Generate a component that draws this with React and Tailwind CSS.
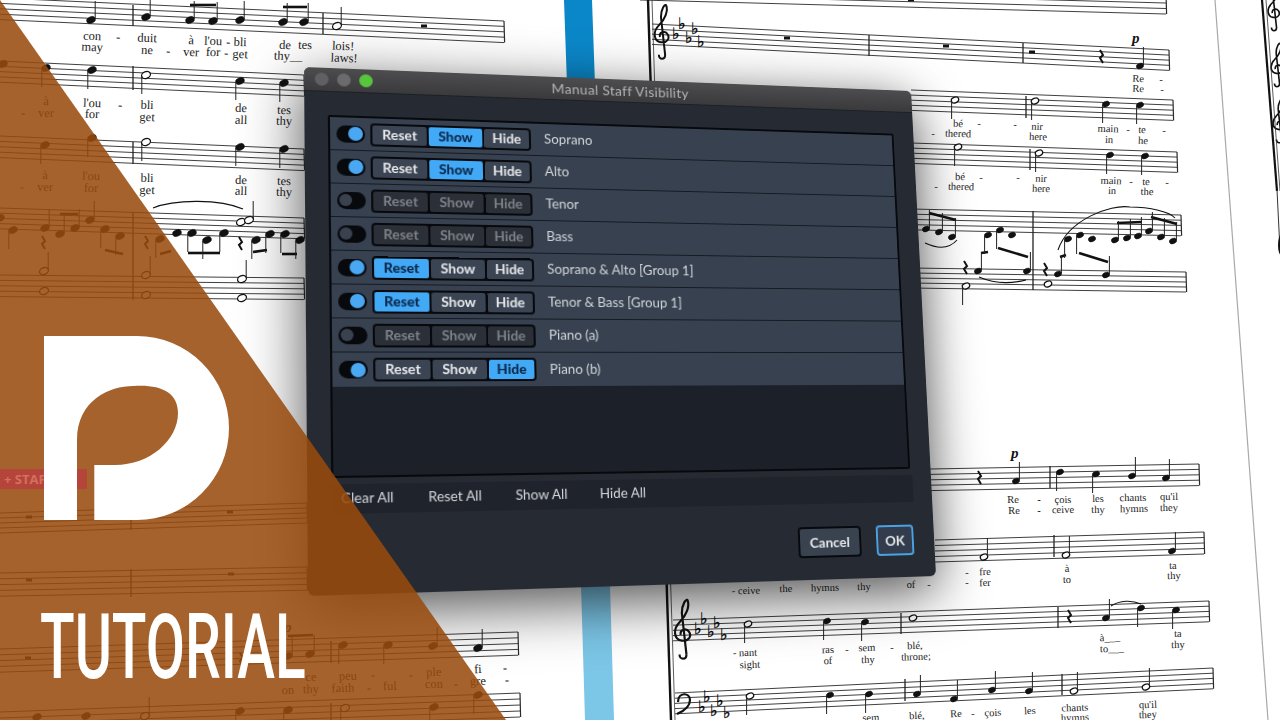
// Thumbnail: engraved score behind, tilted Dorico dialog, brown corner with logo
const rows = [
  { name: "Soprano", on: true, active: "Show" },
  { name: "Alto", on: true, active: "Show" },
  { name: "Tenor", on: false },
  { name: "Bass", on: false },
  { name: "Soprano & Alto [Group 1]", on: true, active: "Reset" },
  { name: "Tenor & Bass [Group 1]", on: true, active: "Reset" },
  { name: "Piano (a)", on: false },
  { name: "Piano (b)", on: true, active: "Hide" },
];

// x1, top y at x1, x2, top y at x2, line spacing
const staves = [
  [0, -2, 504, 21, 5.4],
  [0, 61, 304, 75, 5.3],
  [0, 136, 304, 149, 5.4],
  [0, 208, 304, 218, 5.2],
  [0, 275, 304, 278, 5.4],
  [0, 513, 307, 503, 5],
  [0, 573, 307, 567, 5.8],
  [0, 649, 518, 632, 5.8],
  [0, 712, 520, 693, 6],
  [640, -22, 1166, -8, 5.5],
  [652, 24, 1169, 50, 5.1],
  [911, 90, 1173, 100, 5.1],
  [911, 143, 1177, 152, 5.1],
  [911, 209, 1181, 215, 5.2],
  [911, 268, 1186, 272, 5],
  [930, 469, 1199, 464, 5.4],
  [935, 540, 1204, 532, 5.5],
  [673, 620, 1209, 601, 5.2],
  [675, 693, 1213, 668, 5.2],
];

const bars = [
  [133, 5, 133, 26], [323, 13, 323, 34], [133, 66, 133, 90], [133, 142, 133, 164],
  [133, 212, 133, 300], [131, 508, 131, 530], [131, 569, 131, 597], [331, 641, 331, 663], [331, 703, 331, 727],
  [869, 35, 869, 56], [1023, 43, 1023, 63], [1026, 96, 1026, 118], [1030, 149, 1030, 170], [1033, 211, 1033, 290],
  [1050, 466, 1050, 488], [1054, 535, 1054, 557], [901, 613, 901, 634], [1058, 607, 1058, 628], [905, 679, 905, 701], [1062, 674, 1062, 695],
];

// x, y, stem (1 up, -1 down, 0 none), hollow
const notes = [
  [91, 20, 1], [146, 17, 1], [190, 20, 1], [213, 21, 1], [240, 20, 1], [283, 22, 1], [304, 22, 1], [337, 26, 1, 1],
  [3, 64, -1], [46, 68, -1], [92, 70, -1], [146, 75, -1, 1], [240, 81, -1], [284, 83, -1],
  [45, 145, -1], [92, 138, -1], [146, 142, -1, 1], [240, 147, -1], [284, 149, -1],
  [0, 218, 0], [13, 230, -1], [45, 228, 1], [60, 234, 1], [75, 228, 1], [90, 220, 1], [105, 229, -1], [120, 236, -1],
  [160, 239, -1], [177, 233, 0], [192, 233, -1], [207, 240, -1], [224, 233, -1], [256, 240, -1], [270, 234, -1], [285, 234, -1], [300, 240, -1],
  [241, 222, 0, 1], [249, 220, 1, 1], [44, 271, 1, 1], [44, 291, 0, 1], [146, 275, 1, 1], [146, 295, 0, 1], [242, 279, 1, 1], [242, 298, 0, 1],
  [288, 656, 1], [310, 654, 1], [343, 645, -1], [388, 645, -1], [433, 646, 1], [478, 648, 1],
  [37, 717, 0], [86, 716, 0], [145, 716, 1, 1], [240, 711, -1], [288, 710, -1], [345, 708, -1, 1], [434, 707, -1], [478, 695, -1],
  [1140, 66, 1], [955, 100, -1, 1], [1035, 101, -1, 1], [1106, 104, -1], [1140, 105, -1],
  [958, 147, -1, 1], [1039, 153, -1, 1], [1110, 155, -1], [1145, 156, -1],
  [926, 229, 1], [939, 232, 1], [952, 237, 1], [988, 235, -1], [1000, 230, -1], [1012, 235, 0], [978, 271, 1], [1027, 271, 1], [966, 286, -1, 1],
  [1068, 239, -1], [1080, 235, -1], [1092, 239, 0], [1115, 240, 1], [1127, 238, 1], [1138, 236, 1], [1149, 231, 1], [1161, 237, 1], [1173, 241, 1], [1058, 274, 1], [1106, 275, 1], [1048, 284, 0, 1],
  [1016, 481, 1], [1060, 472, -1], [1096, 474, -1], [1132, 476, 1], [1166, 478, 1],
  [984, 557, 1, 1], [1066, 555, 1, 1], [1172, 551, 1],
  [748, 624, -1, 1], [827, 621, -1], [865, 622, -1], [913, 618, 0, 1], [1106, 618, 1], [1141, 608, -1], [1176, 610, -1],
  [750, 696, -1, 1], [830, 695, -1], [869, 694, -1], [917, 694, 1], [954, 699, 1], [992, 690, 1], [1029, 691, 1], [1074, 691, 1, 1], [1146, 687, 1, 1],
];

const beams = [
  [190, 5, 213, 5], [283, 7, 304, 7], [288, 636, 310, 635],
  [60, 214, 75, 214], [105, 250, 120, 254], [160, 254, 168, 251], [188, 253, 217, 253], [253, 252, 264, 250], [282, 254, 294, 254],
  [929, 213, 953, 220], [981, 253, 985, 252], [998, 248, 1025, 257], [1060, 257, 1063, 255], [1079, 253, 1105, 262],
  [1117, 223, 1139, 222], [1151, 217, 1174, 224],
];

const rests = [
  [424, 26], [29, 517], [230, 512], [29, 580], [231, 574], [28, 658], [787, 38], [946, 46], [1032, 52], [911, 0],
];

const qrests = [[1101, 57], [979, 478], [1069, 617], [241, 660], [43, 243], [146, 243], [240, 244], [965, 268], [1045, 270]];

const lyrics = [
  ["con", 92, 40], ["-", 118, 41], ["duit", 147, 42], ["à", 191, 44], ["l'ou", 213, 45], ["-", 228, 46], ["bli", 240, 46], ["de", 285, 49], ["tes", 305, 49], ["lois!", 343, 50],
  ["may", 92, 51], ["ne", 147, 54], ["-", 168, 55], ["ver", 191, 56], ["for", 213, 56], ["-", 226, 57], ["get", 240, 58], ["thy__", 288, 60], ["laws!", 344, 62],
  ["à", 46, 105], ["ver", 46, 117], ["-", 23, 117], ["l'ou", 92, 107], ["for", 92, 118], ["-", 120, 109], ["bli", 147, 109], ["get", 147, 121], ["de", 241, 112], ["all", 241, 124], ["tes", 284, 114], ["thy", 284, 125],
  ["à", 45, 179], ["ver", 45, 191], ["-", 22, 191], ["l'ou", 91, 180], ["for", 91, 192], ["bli", 147, 182], ["get", 147, 194], ["de", 241, 184], ["all", 241, 195], ["tes", 284, 185], ["thy", 284, 196],
  ["ce", 311, 681], ["peu", 348, 680], ["-", 373, 679], ["-", 411, 679], ["ple", 434, 676], ["fi", 478, 673], ["-", 505, 672],
  ["on", 288, 694], ["thy", 311, 693], ["faith", 343, 692], ["-", 369, 692], ["ful", 390, 690], ["con", 434, 688], ["-", 456, 688], ["gre", 478, 685], ["-", 507, 684],
];

const lyricsRight = [
  ["Re", 1138, 82], ["Re", 1138, 92], ["-", 1161, 83], ["-", 1162, 93],
  ["bé", 958, 127], ["-", 979, 127], ["-", 1015, 128], ["nir", 1037, 130], ["main", 1108, 132], ["-", 1128, 133], ["te", 1142, 133], ["-", 1164, 134],
  ["thered", 958, 137], ["-", 933, 137], ["here", 1038, 140], ["in", 1109, 143], ["he", 1143, 144],
  ["bé", 960, 180], ["-", 981, 181], ["-", 1018, 181], ["nir", 1041, 182], ["main", 1111, 184], ["-", 1131, 185], ["te", 1146, 185], ["-", 1167, 186],
  ["thered", 961, 190], ["-", 936, 190], ["here", 1041, 192], ["in", 1112, 194], ["the", 1147, 195],
  ["Re", 1013, 503], ["-", 1039, 503], ["çois", 1063, 503], ["les", 1098, 502], ["chants", 1133, 501], ["qu'il", 1169, 500],
  ["Re", 1014, 514], ["-", 1039, 514], ["ceive", 1063, 513], ["thy", 1098, 513], ["hymns", 1134, 512], ["they", 1169, 511],
  ["-", 967, 576], ["fre", 985, 575], ["à", 1067, 572], ["ta", 1173, 569], ["-", 967, 586], ["fer", 985, 586], ["to", 1067, 583], ["thy", 1174, 579],
  ["- ceive", 746, 594], ["the", 786, 592], ["hymns", 825, 591], ["thy", 864, 590], ["of", 911, 588], ["-", 929, 588],
  ["- nant", 745, 656], ["sight", 750, 668], ["ras", 828, 653], ["of", 828, 664], ["-", 847, 653], ["sem", 867, 651], ["thy", 868, 663], ["-", 892, 651], ["blé,", 915, 649], ["throne;", 916, 660],
  ["à___", 1110, 641], ["to___", 1112, 652], ["ta", 1178, 637], ["thy", 1178, 648],
  ["sem", 871, 721], ["blé,", 917, 719], ["Re", 956, 717], ["-", 973, 717], ["çois", 993, 716], ["les", 1030, 714], ["chants", 1075, 711], ["hymns", 1075, 721], ["qu'il", 1148, 708], ["they", 1148, 718],
];

const flats = [
  [675, 39], [681, 29], [688, 43], [694, 34], [700, 47],
  [697, 634], [703, 624], [710, 637], [716, 628], [723, 640],
  [701, 712], [706, 702], [713, 716], [719, 706], [726, 718],
];

function tilt(y) {
  return 2.6 - (y * 4.8) / 720;
}

function TrebleClef({ x, y, s = 1 }) {
  return (
    <path
      transform={`translate(${x} ${y}) scale(${s})`}
      d="M3 16 L-1 -20 C-1 -28 3 -33 4 -31 C6 -26 3 -18 -3 -12 C-9 -6 -8 3 -1 4 C5 5 8 0 5 -4 C3 -7 -3 -6 -2 -1 M3 16 C3 21 -3 21 -3 16"
      fill="none"
      stroke="#111"
      strokeWidth="1.9"
    />
  );
}

function Note({ x, y, stem, hollow }) {
  const rx = x < 560 ? 4.6 : 3.8;
  return (
    <g>
      <ellipse
        cx={x}
        cy={y}
        rx={rx}
        ry={rx * 0.72}
        transform={`rotate(-22 ${x} ${y})`}
        fill={hollow ? "#fff" : "#111"}
        stroke="#111"
        strokeWidth={hollow ? 1.3 : 0.4}
      />
      {stem === 1 && <line x1={x + rx - 0.4} y1={y - 1} x2={x + rx - 0.4} y2={y - 19} stroke="#222" strokeWidth="1" />}
      {stem === -1 && <line x1={x - rx + 0.4} y1={y + 1} x2={x - rx + 0.4} y2={y + 19} stroke="#222" strokeWidth="1" />}
    </g>
  );
}

function Score() {
  return (
    <svg className="absolute inset-0" width="1280" height="720" viewBox="0 0 1280 720">
      <polygon points="564,0 592,0 595,85 567,85" fill="#0a87c9" />
      <polygon points="581,585 610,585 614,720 585,720" fill="#7cc6e7" />

      {staves.map(([x1, y1, x2, y2, sp], i) => (
        <g key={i} stroke="#2a2a2a" strokeWidth="0.9">
          {[0, 1, 2, 3, 4].map((n) => (
            <line key={n} x1={x1} y1={y1 + n * sp} x2={x2} y2={y2 + n * sp} />
          ))}
          <line x1={x2} y1={y2} x2={x2 + 0.6} y2={y2 + 4 * sp} strokeWidth="1.2" />
        </g>
      ))}
      {bars.map(([x1, y1, x2, y2], i) => (
        <line key={i} x1={x1} y1={y1} x2={x2} y2={y2} stroke="#222" strokeWidth="1.3" />
      ))}
      {beams.map(([x1, y1, x2, y2], i) => (
        <line key={i} x1={x1} y1={y1} x2={x2 + 3} y2={y2} stroke="#111" strokeWidth="2.6" />
      ))}
      {notes.map(([x, y, stem, hollow], i) => (
        <Note key={i} x={x} y={y} stem={stem} hollow={hollow} />
      ))}
      {rests.map(([x, y], i) => (
        <rect key={i} x={x - 3} y={y - 1.5} width="6" height="3" fill="#111" />
      ))}
      {qrests.map(([x, y], i) => (
        <path key={i} d={`M${x - 1} ${y - 7} L${x + 2} ${y - 2} L${x - 1} ${y + 1} L${x + 2} ${y + 6}`} fill="none" stroke="#111" strokeWidth="2" />
      ))}

      <g fontFamily="'Liberation Serif', serif" fontSize="12.5" fill="#222" textAnchor="middle">
        {lyrics.map(([t, x, y], i) => (
          <text key={i} x={x} y={y} transform={`rotate(${tilt(y)} ${x} ${y})`}>{t}</text>
        ))}
      </g>
      <g fontFamily="'Liberation Serif', serif" fontSize="10.5" fill="#222" textAnchor="middle">
        {lyricsRight.map(([t, x, y], i) => (
          <text key={i} x={x} y={y} transform={`rotate(${tilt(y)} ${x} ${y})`}>{t}</text>
        ))}
      </g>
      <g fontFamily="'DejaVu Sans', sans-serif" fontSize="16" fill="#000">
        {flats.map(([x, y], i) => (
          <text key={i} x={x - 3} y={y} stroke="#000" strokeWidth="0.3">♭</text>
        ))}
      </g>
      <g fontFamily="'Liberation Serif', serif" fontSize="15" fontStyle="italic" fontWeight="bold" fill="#111">
        <text x="1132" y="43">p</text>
        <text x="1011" y="458">p</text>
        <text x="284" y="632">p</text>
      </g>

      <TrebleClef x={662} y={38} s={1.05} />
      <TrebleClef x={683} y={636} s={1.15} />
      <TrebleClef x={1274} y={14} s={0.85} />
      <TrebleClef x={1277} y={70} s={0.85} />
      <TrebleClef x={1279} y={126} s={0.85} />
      <path d="M678 702 C678 692 690 692 690 700 C690 707 684 711 677 714" fill="none" stroke="#111" strokeWidth="2.2" />

      <g fill="none" stroke="#111" strokeWidth="1.1">
        <path d="M153 208 C175 199 220 199 243 209" />
        <path d="M1111 606 C1120 600 1132 600 1141 604" />
        <path d="M1058 250 C1068 220 1110 204 1130 207 C1150 207 1170 212 1175 218" />
        <path d="M925 243 C940 250 950 248 957 240" />
        <path d="M979 277 C995 284 1010 284 1026 280" />
      </g>

      {/* system lines and page edges */}
      <line x1="648" y1="0" x2="671" y2="720" stroke="#111" strokeWidth="2.4" />
      <line x1="652" y1="0" x2="675" y2="720" stroke="#333" strokeWidth="0.8" />
      <line x1="1215" y1="0" x2="1268" y2="720" stroke="#a9a9a9" strokeWidth="1.2" />
      <line x1="1262" y1="0" x2="1277" y2="191" stroke="#111" strokeWidth="2.2" />
      <line x1="1266" y1="0" x2="1280" y2="191" stroke="#333" strokeWidth="0.8" />
      <line x1="1277" y1="190" x2="1280" y2="250" stroke="#333" strokeWidth="1" />
      <ellipse cx="1281" cy="245" rx="3" ry="10" fill="#111" />
    </svg>
  );
}

function Toggle({ on }) {
  return (
    <div className="w-[27px] h-[17px] rounded-full bg-[#07090d] flex items-center px-[2px] shrink-0">
      {on ? (
        <div className="ml-auto w-[14px] h-[14px] rounded-full bg-[#4aa8f2]" />
      ) : (
        <div className="w-[12px] h-[12px] rounded-full bg-[#3a4250]" />
      )}
    </div>
  );
}

function Segment({ label, width, on, active }) {
  let tone = "bg-[#2b2f37] text-[#7d8188] font-bold";
  if (on) tone = "bg-[#3b4453] text-[#e6e8ea] font-bold";
  if (active) tone = "bg-[#42a9f6] text-[#0c2a4d] font-black";
  return (
    <div className={`${width} h-full rounded-[2px] flex items-center justify-center text-[13.5px] ${tone}`}>
      {label}
    </div>
  );
}

function Row({ row }) {
  return (
    <div className="h-[33px] flex items-center pl-[6px] bg-[#374150] border-b border-[#141a22] last:border-b-0">
      <Toggle on={row.on} />
      <div className="ml-[5px] h-[23px] w-[156px] flex gap-[2px] p-[2px] rounded-[4px] bg-[#07090d]">
        <Segment label="Reset" width="w-[52px]" on={row.on} active={row.active === "Reset"} />
        <Segment label="Show" width="w-[52px]" on={row.on} active={row.active === "Show"} />
        <Segment label="Hide" width="w-[44px]" on={row.on} active={row.active === "Hide"} />
      </div>
      <span className="ml-[13px] text-[13.3px] text-[#d3d6da]">{row.name}</span>
    </div>
  );
}

// maps the 620x510 dialog box onto the four corners measured in the picture
function quadTransform(w, h, [[x0, y0], [x1, y1], [x2, y2], [x3, y3]]) {
  const dx1 = x1 - x2;
  const dx2 = x3 - x2;
  const sx = x0 - x1 + x2 - x3;
  const dy1 = y1 - y2;
  const dy2 = y3 - y2;
  const sy = y0 - y1 + y2 - y3;
  const den = dx1 * dy2 - dx2 * dy1;
  const g = (sx * dy2 - dx2 * sy) / den;
  const k = (dx1 * sy - sx * dy1) / den;
  const a = x1 - x0 + g * x1;
  const b = x3 - x0 + k * x3;
  const d = y1 - y0 + g * y1;
  const e = y3 - y0 + k * y3;
  return `matrix3d(${a / w},${d / w},0,${g / w},${b / h},${e / h},0,${k / h},0,0,1,0,${x0},${y0},0,1)`;
}

function Dialog() {
  const corners = [[304, 67], [911, 91], [936, 576], [308, 596]];
  return (
    <div
      className="absolute left-0 top-0 w-[620px] h-[510px] origin-top-left rounded-[6px] bg-[#252a33] flex flex-col shadow-[0_14px_55px_rgba(0,0,0,0.7)] font-['Lato',sans-serif]"
      style={{ transform: quadTransform(620, 510, corners) }}
    >
      <div className="relative h-[24px] shrink-0 rounded-t-[6px] bg-gradient-to-b from-[#4d4d4f] to-[#3a3a3c] flex items-center justify-center border-b border-[#1c1f25]">
        <div className="absolute left-[10px] flex gap-[8px]">
          <div className="w-[13px] h-[13px] rounded-full bg-[#606062]" />
          <div className="w-[13px] h-[13px] rounded-full bg-[#6b6b6d]" />
          <div className="w-[13px] h-[13px] rounded-full bg-[#58c63c]" />
        </div>
        <span className="text-[14px] tracking-[0.3px] text-[#b4b4b4]">Manual Staff Visibility</span>
      </div>

      <div className="flex-1 flex flex-col pt-[23px] pl-[22px] pr-[22px] pb-[22px]">
        <div className="h-[353px] bg-[#1c2029] border-2 border-[#07090d] rounded-[2px]">
          {rows.map((row) => (
            <Row key={row.name} row={row} />
          ))}
        </div>
        <div className="mt-[6px] -mr-[2px] h-[28px] rounded-[3px] bg-[#1f232c] flex items-center text-[13.3px] text-[#d5d7da]">
          <span className="w-[90px] pl-[9px]">Clear All</span>
          <span className="w-[83px]">Reset All</span>
          <span className="w-[82px]">Show All</span>
          <span>Hide All</span>
        </div>
        <div className="mt-auto flex justify-end gap-[16px]">
          <button className="w-[66px] h-[31px] rounded-[4px] bg-[#39424f] border-2 border-[#07090d] text-[14px] font-bold text-[#e6e8ea]">
            Cancel
          </button>
          <button className="w-[40px] h-[31px] rounded-[4px] bg-[#323c4c] border-2 border-[#4ba3e6] text-[14px] font-bold text-[#e6e8ea]">
            OK
          </button>
        </div>
      </div>
    </div>
  );
}

export default function App() {
  return (
    <div className="relative w-[1280px] h-[720px] overflow-hidden bg-white">
      <Score />
      <Dialog />

      {/* brown corner over everything */}
      <div className="absolute left-0 top-0 w-[506px] h-[720px] bg-[#994b0d]/87 [clip-path:polygon(0_0,100%_100%,0_100%)]" />

      <div className="absolute left-0 top-[469px] w-[87px] h-[20px] overflow-hidden bg-[#b5453a] pl-[4px] text-[13px] leading-[20px] font-bold whitespace-nowrap text-[#d3705f] font-['Open_Sans',sans-serif]">
        + STAFF X.
      </div>

      <svg className="absolute left-0 top-0" width="300" height="540" viewBox="0 0 300 540">
        <path
          fillRule="evenodd"
          fill="#fff"
          d="M44 336 H137 A92 92 0 0 1 137 520 H94.3 V465 H115 C150 465 178 440 178 413 C178 392 160 384 133 386 C110 386 77 400 77 440 V520 H44 Z"
        />
      </svg>

      <div className="absolute left-[40px] top-[595px] origin-top-left scale-x-[0.625] text-[91px] leading-[105px] font-medium text-white whitespace-nowrap font-['Roboto',sans-serif]">
        TUTORIAL
      </div>
    </div>
  );
}
